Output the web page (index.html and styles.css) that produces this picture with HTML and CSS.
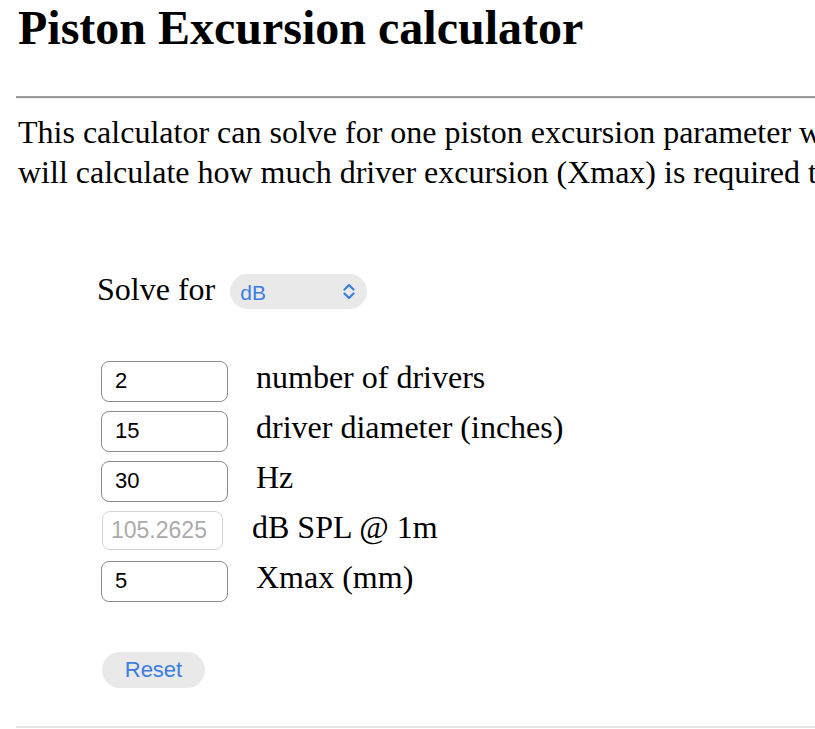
FILE: index.html
```html
<!DOCTYPE html>
<html lang="en">
<head>
<meta charset="utf-8">
<title>Piston Excursion calculator</title>
<link rel="stylesheet" href="styles.css">
</head>
<body>
<div class="page">
  <h1 class="title">Piston Excursion calculator</h1>
  <hr class="rule">
  <p class="intro">This calculator can solve for one piston excursion parameter when the others are known. For example, it<br>will calculate how much driver excursion (Xmax) is required to reach a given output level at a given frequency.</p>

  <form class="calc">
    <div class="solve">
      <span class="solve-label">Solve for</span>
      <div class="select">
        <span class="select-value">dB</span>
        <svg class="select-icon" width="12" height="17" viewBox="0 0 12 17" aria-hidden="true">
          <path d="M1.5 6.5 L6 2 L10.5 6.5" fill="none" stroke="#3b7ee0" stroke-width="2.2" stroke-linecap="round" stroke-linejoin="round"/>
          <path d="M1.5 10.5 L6 15 L10.5 10.5" fill="none" stroke="#3b7ee0" stroke-width="2.2" stroke-linecap="round" stroke-linejoin="round"/>
        </svg>
      </div>
    </div>

    <div class="fields">
      <div class="row"><input class="field" type="text" value="2"><span class="label">number of drivers</span></div>
      <div class="row"><input class="field" type="text" value="15"><span class="label">driver diameter (inches)</span></div>
      <div class="row"><input class="field" type="text" value="30"><span class="label">Hz</span></div>
      <div class="row"><input class="field field-disabled" type="text" value="105.2625" disabled><span class="label">dB SPL @ 1m</span></div>
      <div class="row"><input class="field" type="text" value="5"><span class="label">Xmax (mm)</span></div>
    </div>

    <button class="reset" type="button">Reset</button>
  </form>
  <hr class="rule-bottom">
</div>
</body>
</html>
```
FILE: styles.css
```css
html, body {
  margin: 0;
  padding: 0;
  overflow: hidden;
  background: #ffffff;
}

body {
  font-family: "Liberation Serif", "Times New Roman", serif;
  color: #000;
}

.page {
  width: 1400px;
  padding-left: 16px;
}

.title {
  margin: 0;
  padding-left: 2px;
  font-size: 48px;
  font-weight: bold;
  line-height: normal;
}

.rule {
  margin: 41px 0 0 0;
  width: 799px;
  height: 0;
  border: 0;
  border-top: 2px solid #9a9a9a;
  border-bottom: 1px solid #ececec;
}

.intro {
  margin: 13px 0 0 0;
  padding-left: 2px;
  font-size: 32px;
  line-height: 40px;
  white-space: nowrap;
}

.calc {
  margin: 79px 0 0 80px;
  display: flex;
  flex-direction: column;
  align-items: flex-start;
}

.solve {
  display: flex;
  align-items: center;
  height: 40px;
}

.solve-label {
  font-size: 32px;
  line-height: 40px;
  margin-left: 1px;
  position: relative;
  top: -2px;
}

.select {
  margin-left: 15px;
  width: 137px;
  height: 35px;
  box-sizing: border-box;
  border-radius: 18px;
  background: #e9e9e9;
  display: flex;
  align-items: center;
  justify-content: space-between;
  padding: 0 12px 0 10px;
}

.select-value {
  font-family: "Liberation Sans", Arial, sans-serif;
  font-size: 21px;
  line-height: 21px;
  color: #3b7ee0;
  position: relative;
  top: 1px;
}

.select-icon {
  display: block;
}

.fields {
  margin-top: 46px;
  display: flex;
  flex-direction: column;
  gap: 9px;
}

.row {
  display: flex;
  align-items: baseline;
  height: 41px;
}

.field {
  box-sizing: border-box;
  width: 127px;
  height: 41px;
  margin: 0 0 0 5px;
  padding: 0 13px;
  border: 1.5px solid #8c8c8c;
  border-radius: 8px;
  background: #fff;
  font-family: "Liberation Sans", Arial, sans-serif;
  font-size: 22px;
  color: #000;
  outline: none;
}

.field-disabled {
  width: 121px;
  height: 39px;
  margin-left: 6px;
  padding: 0 8px;
  border-color: #d4d4d4;
  color: #ababab;
  -webkit-text-fill-color: #ababab;
  opacity: 1;
  font-size: 23px;
}

.label {
  margin-left: 28px;
  font-size: 32px;
  line-height: 40px;
}

.field-disabled + .label {
  margin-left: 29px;
}

.reset {
  margin: 54px 0 0 6px;
  width: 103px;
  height: 36px;
  border: 0;
  border-radius: 18px;
  background: #e9e9e9;
  font-family: "Liberation Sans", Arial, sans-serif;
  font-size: 22px;
  line-height: 36px;
  color: #3b7ee0;
  padding: 0;
}

.rule-bottom {
  margin: 38px 0 0 0;
  width: 799px;
  height: 0;
  border: 0;
  border-top: 2px solid #e6e6e6;
}
```
